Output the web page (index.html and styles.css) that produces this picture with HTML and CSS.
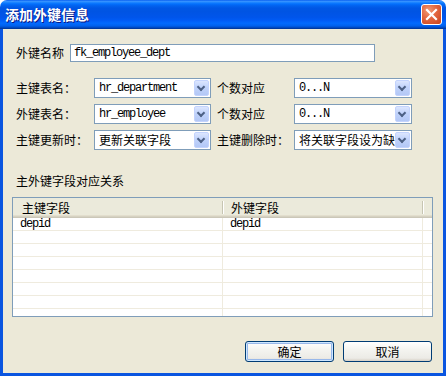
FILE: index.html
```html
<!DOCTYPE html>
<html lang="zh-CN">
<head>
    <meta charset="UTF-8">
    <title>添加外键信息</title>
    <link rel="stylesheet" href="styles.css">
</head>
<body>

<div class="window">
    <div class="titlebar">
        <span class="title">添加外键信息</span>
        <span class="close">
            <svg width="13" height="13" viewBox="0 0 13 13"><path d="M2 2 L11 11 M11 2 L2 11" stroke="#fff" stroke-width="2.2" stroke-linecap="square"/></svg>
        </span>
    </div>

    <div class="client">
        <div class="name-row">
            <label>外键名称</label>
            <div class="textbox mono">fk_employee_dept</div>
        </div>

        <!-- table / relation settings -->
        <div class="combo-grid">
            <label>主键表名：</label>
            <div class="combo"><span class="combo-text mono">hr_department</span><span class="drop"></span></div>
            <label>个数对应</label>
            <div class="combo"><span class="combo-text mono">0...N</span><span class="drop"></span></div>

            <label>外键表名：</label>
            <div class="combo"><span class="combo-text mono">hr_employee</span><span class="drop"></span></div>
            <label>个数对应</label>
            <div class="combo"><span class="combo-text mono">0...N</span><span class="drop"></span></div>

            <label>主键更新时：</label>
            <div class="combo"><span class="combo-text">更新关联字段</span><span class="drop"></span></div>
            <label>主键删除时：</label>
            <div class="combo"><span class="combo-text">将关联字段设为缺</span><span class="drop"></span></div>
        </div>

        <div class="section-label">主外键字段对应关系</div>

        <div class="listview">
            <div class="lv-head">
                <div class="lv-col">主键字段</div>
                <div class="lv-col">外键字段</div>
                <div class="lv-col"></div>
            </div>
            <div class="lv-body">
                <div class="lv-cell mono">depid</div><div class="lv-cell mono">depid</div><div class="lv-cell"></div>
                <div class="lv-cell"></div><div class="lv-cell"></div><div class="lv-cell"></div>
                <div class="lv-cell"></div><div class="lv-cell"></div><div class="lv-cell"></div>
                <div class="lv-cell"></div><div class="lv-cell"></div><div class="lv-cell"></div>
                <div class="lv-cell"></div><div class="lv-cell"></div><div class="lv-cell"></div>
                <div class="lv-cell"></div><div class="lv-cell"></div><div class="lv-cell"></div>
                <div class="lv-cell"></div><div class="lv-cell"></div><div class="lv-cell"></div>
                <div class="lv-cell last"></div><div class="lv-cell last"></div><div class="lv-cell last"></div>
            </div>
        </div>

        <div class="buttons">
            <button class="btn default">确定</button>
            <button class="btn">取消</button>
        </div>
    </div>
</div>

</body>
</html>
```

FILE: styles.css
```css
body {
    margin: 0;
    padding: 0;
    background: #fff;
    font-family: "Noto Sans CJK SC", "Liberation Sans", sans-serif;
    font-size: 12px;
    color: #000;
}
.window {
    width: 446px;
    height: 376px;
    display: flex;
    flex-direction: column;
}
.titlebar {
    height: 29px;
    flex: none;
    display: flex;
    align-items: center;
    justify-content: space-between;
    padding: 0 4px 0 5px;
    border-radius: 7px 7px 0 0;
    background: linear-gradient(to bottom, #0058ee 0%, #3a93ff 4%, #288eff 7%, #127dff 10%, #036ffc 14%, #0262ee 20%, #0057e5 28%, #0054e3 40%, #0055eb 60%, #005bf5 70%, #026afe 80%, #0062ef 88%, #0052d6 93%, #0040ab 97%, #003092 100%);
}
.title {
    color: #fff;
    font-weight: bold;
    font-size: 14px;
    line-height: 16px;
    margin-top: -1px;
    text-shadow: 1px 1px 0 #0a1883;
}
.close {
    width: 19px;
    height: 19px;
    border: 1px solid #fff;
    border-radius: 3px;
    display: flex;
    align-items: center;
    justify-content: center;
    background: radial-gradient(circle at 35% 30%, #f29a74 0%, #e2663f 45%, #c9421b 100%);
    margin-top: -1px;
}
.close svg {
    display: block;
}
.client {
    flex: 1;
    background: #ece9d8;
    border: 3px solid #0a55e0;
    border-top: none;
    padding: 0 10px 0 9px;
}
.mono {
    font-family: "Liberation Mono", monospace;
    letter-spacing: -1.2px;
}
label {
    display: block;
    line-height: 14px;
}
.name-row {
    display: flex;
    align-items: center;
    margin-top: 15px;
}
.name-row label {
    width: 58px;
    padding-left: 4px;
    box-sizing: border-box;
    flex: none;
}
.textbox {
    width: 305px;
    height: 18px;
    box-sizing: border-box;
    border: 1px solid #7f9db9;
    background: #fff;
    padding-left: 3px;
    line-height: 16px;
}
.combo-grid {
    display: grid;
    grid-template-columns: 82px 117px 83px 118px;
    grid-auto-rows: 20px;
    row-gap: 6px;
    align-items: center;
    margin-top: 16px;
}
.combo-grid label {
    padding-left: 4px;
}
.combo-grid label:nth-child(4n+3) {
    padding-left: 6px;
}
.combo {
    height: 20px;
    box-sizing: border-box;
    border: 1px solid #7f9db9;
    background: #fff;
    display: flex;
    align-items: center;
    padding: 1px;
}
.combo-text {
    flex: 1;
    overflow: hidden;
    white-space: nowrap;
    padding-left: 3px;
    line-height: 16px;
}
.drop {
    width: 15px;
    height: 16px;
    flex: none;
    box-sizing: border-box;
    border: 1px solid #c3d3fd;
    border-radius: 2px;
    background: linear-gradient(to bottom, #dce6fe 0%, #c1d3fb 45%, #b3c8f6 100%);
    position: relative;
}
.drop::after {
    content: "";
    position: absolute;
    left: 3px;
    top: 3px;
    width: 4px;
    height: 4px;
    border-right: 2px solid #4d6185;
    border-bottom: 2px solid #4d6185;
    transform: rotate(45deg);
}
.section-label {
    margin: 24px 0 0 4px;
    line-height: 14px;
}
.listview {
    margin-top: 9px;
    height: 120px;
    box-sizing: border-box;
    border: 1px solid #7f9db9;
    background: #fff;
    overflow: hidden;
}
.lv-head {
    display: grid;
    grid-template-columns: 210px 200px 1fr;
    height: 20px;
    background: #ebeadb;
    box-shadow: inset 0 -1px 0 #cbc7b8, inset 0 -2px 0 #d6d2c2, inset 0 -3px 0 #e2decd;
}
.lv-col {
    position: relative;
    padding-left: 9px;
    line-height: 19px;
}
.lv-col:nth-child(2) {
    padding-left: 8px;
}
.lv-col::after {
    content: "";
    position: absolute;
    right: 0;
    top: 3px;
    height: 13px;
    width: 1px;
    background: #c7c5b2;
    box-shadow: 1px 0 0 #fff;
}
.lv-col:last-child::after {
    display: none;
}
.lv-body {
    display: grid;
    grid-template-columns: 210px 200px 1fr;
    grid-auto-rows: 13px;
}
.lv-cell {
    border-right: 1px solid #efebde;
    border-bottom: 1px solid #efebde;
    padding-left: 7px;
    line-height: 12px;
    font-size: 12px;
}
.lv-cell:nth-child(3n) {
    border-right: none;
}
.buttons {
    display: flex;
    justify-content: flex-end;
    gap: 9px;
    margin-top: 24px;
    padding-right: 1px;
}
.btn {
    width: 89px;
    height: 21px;
    box-sizing: border-box;
    border: 1px solid #003c74;
    border-radius: 3px;
    background: linear-gradient(to bottom, #fff 0%, #f4f4f0 40%, #ecebe6 85%, #d6d0c5 100%);
    font-family: "Noto Sans CJK SC", sans-serif;
    font-size: 12px;
    line-height: 17px;
    padding: 0;
    color: #000;
}
.btn.default {
    box-shadow: inset 0 0 0 1px #cee7ff, inset 0 0 0 2px #98b8ea;
}
```
